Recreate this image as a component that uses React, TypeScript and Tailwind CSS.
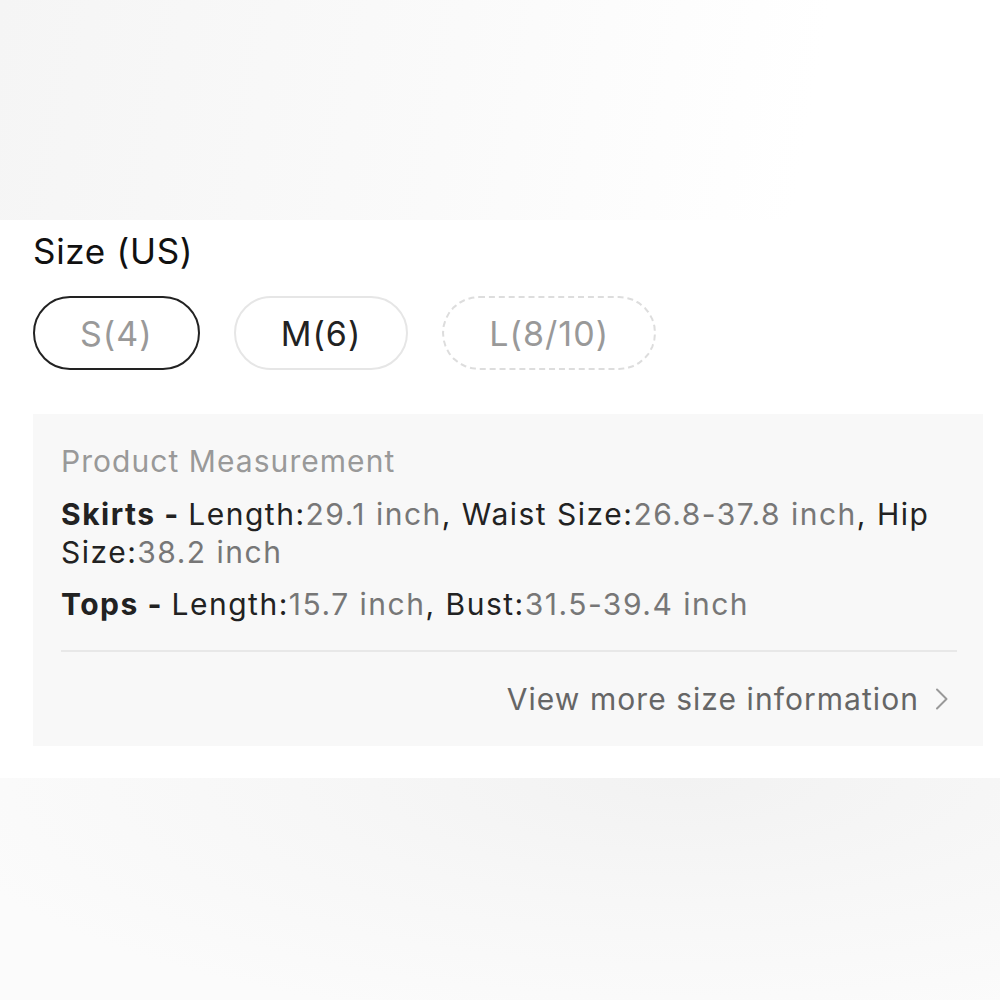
import React from 'react';

const sizes = [
  { label: 'S(4)', state: 'selected' },
  { label: 'M(6)', state: 'normal' },
  { label: 'L(8/10)', state: 'soldout' },
];

const SizePill = ({ label, state }: { label: string; state: string }) => {
  const cls =
    state === 'selected'
      ? 'border-2 border-[#222] text-[#999]'
      : state === 'soldout'
      ? 'border-2 border-dashed border-[#ddd] text-[#999]'
      : 'border-2 border-[#e6e6e6] text-[#222]';
  return (
    <div className={`h-[74px] flex items-center justify-center rounded-full px-[45px] text-[34px] tracking-[0.03em] ${cls}`}>
      {label}
    </div>
  );
};

export default function App() {
  return (
    <div className="w-[1000px] h-[1000px] flex flex-col bg-white" style={{ fontFamily: 'Inter, "Liberation Sans", sans-serif' }}>
      <div className="h-[220px] bg-[linear-gradient(100deg,#f5f5f5_0%,#fafafa_45%,#ffffff_80%)]" />

      <div className="h-[558px] bg-white pl-[33px] pr-[17px] pt-[10px]">
        <div className="text-[35px] tracking-[0.02em] text-[#111] leading-[42px]">Size (US)</div>

        <div className="flex gap-[34px] mt-[24px]">
          {sizes.map((s) => (
            <SizePill key={s.label} label={s.label} state={s.state} />
          ))}
        </div>

        <div className="mt-[44px] bg-[#f8f8f8] pl-[28px] pr-[26px] pt-[28px] pb-[28px] text-[30px] leading-[38px] tracking-[0.035em]">
          <div className="text-[#999]">Product Measurement</div>
          <div className="mt-[15px] text-[#222] tracking-[0.05em]">
            <span className="font-bold">Skirts - </span>
            Length:<span className="text-[#777]">29.1 inch</span>, Waist Size:
            <span className="text-[#777]">26.8-37.8 inch</span>, Hip Size:
            <span className="text-[#777]">38.2 inch</span>
          </div>
          <div className="mt-[14px] text-[#222] tracking-[0.05em]">
            <span className="font-bold">Tops - </span>
            Length:<span className="text-[#777]">15.7 inch</span>, Bust:
            <span className="text-[#777]">31.5-39.4 inch</span>
          </div>
          <div className="mt-[27px] border-t-2 border-[#e8e8e8]" />
          <div className="flex justify-end items-center gap-[16px] pt-[28px] pr-[8px] text-[#666]">
            <span>View more size information</span>
            <svg width="14" height="24" viewBox="0 0 14 24" fill="none">
              <path d="M2 2.5l9.5 9.5L2 21.5" stroke="#999" strokeWidth="2" strokeLinecap="round" strokeLinejoin="round" />
            </svg>
          </div>
        </div>
      </div>

      <div className="flex-1 bg-[radial-gradient(ellipse_at_68%_0%,#f2f2f2_0%,#f7f7f7_40%,#fbfbfb_80%)]" />
    </div>
  );
}
